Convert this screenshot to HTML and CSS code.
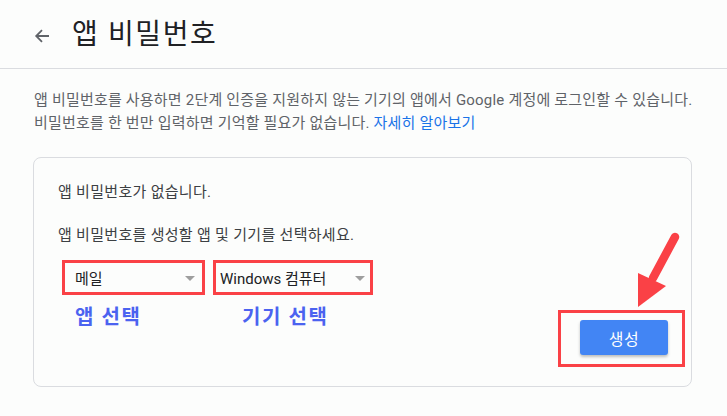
FILE: index.html
```html
<!DOCTYPE html>
<html lang="ko">
<head>
<meta charset="utf-8">
<title>앱 비밀번호</title>
<link rel="stylesheet" href="styles.css">
</head>
<body>
<header class="top">
  <svg class="back" width="16" height="16" viewBox="0 0 16 16" aria-hidden="true">
    <path d="M15 8H2.5M8 2.2L2.2 8L8 13.8" fill="none" stroke="#5f6368" stroke-width="1.8"/>
  </svg>
  <h1 class="title">앱 비밀번호</h1>
</header>
<p class="desc">앱 비밀번호를 사용하면 2단계 인증을 지원하지 않는 기기의 앱에서 Google 계정에 로그인할 수 있습니다.<br>비밀번호를 한 번만 입력하면 기억할 필요가 없습니다. <a class="link" href="#">자세히 알아보기</a></p>
<section class="card">
  <p class="line">앱 비밀번호가 없습니다.</p>
  <p class="line second">앱 비밀번호를 생성할 앱 및 기기를 선택하세요.</p>
  <div class="row">
    <div class="pickers">
      <div class="select s1"><span>메일</span><i class="tri"></i></div>
      <div class="select s2"><span>Windows 컴퓨터</span><i class="tri"></i></div>
      <div class="label l1">앱 선택</div>
      <div class="label l2">기기 선택</div>
    </div>
    <div class="btnbox"><button class="gen">생성</button></div>
  </div>
  <svg class="pointer" width="90" height="90" viewBox="0 0 90 90" aria-hidden="true">
    <path d="M75 13 L53 54" stroke="#fa4146" stroke-width="8.5" stroke-linecap="round" fill="none"/>
    <polygon points="38,49 66,62 38,83" fill="#fa4146"/>
  </svg>
</section>
</body>
</html>
```
FILE: styles.css
```css
html, body {
  margin: 0;
  padding: 0;
  background: #fcfdfc;
}
body {
  font-family: "Roboto", "Noto Sans CJK KR", sans-serif;
  color: #3c4043;
}
.top {
  border-bottom: 1px solid #dadce0;
  display: flex;
  align-items: center;
  padding-left: 34px;
  box-sizing: border-box;
  height: 69px;
  padding-top: 2px;
}
.back {
  display: block;
  margin-top: 2px;
}
.title {
  margin: 0 0 0 22px;
  font-size: 28px;
  font-weight: 400;
  color: #202124;
  line-height: 36px;
  letter-spacing: 1.6px;
}
.desc {
  margin: 20px 0 0 34px;
  font-size: 15px;
  line-height: 23px;
  letter-spacing: 0.2px;
  color: #5f6368;
}
.link {
  color: #1a73e8;
  text-decoration: none;
}
.card {
  position: relative;
  margin: 22px 0 0 33px;
  width: 659px;
  box-sizing: border-box;
  height: 230px;
  border: 1px solid #dadce0;
  border-radius: 8px;
  padding: 24px 6px 0 24px;
}
.line {
  margin: 0;
  font-size: 15px;
  line-height: 20px;
  letter-spacing: 0.3px;
  color: #3c4043;
}
.second {
  margin-top: 23px;
}
.row {
  display: flex;
  justify-content: space-between;
  align-items: flex-start;
  margin-top: 15px;
}
.pickers {
  margin-left: 4px;
  display: grid;
  grid-template-columns: 143px 160px;
  column-gap: 8px;
  row-gap: 10px;
}
.select {
  height: 35px;
  box-sizing: border-box;
  border: 3px solid #fa4146;
  display: flex;
  align-items: center;
  justify-content: space-between;
  font-size: 15px;
  color: #202124;
}
.s1 { padding: 0 7px 0 10px; }
.s2 { padding: 0 5px 0 4px; }
.tri {
  width: 0;
  height: 0;
  border-left: 5.5px solid transparent;
  border-right: 5.5px solid transparent;
  border-top: 5.5px solid #9e9e9e;
  margin-top: 2px;
}
.label {
  font-size: 20px;
  font-weight: 700;
  color: #4b63f0;
  line-height: 24px;
  letter-spacing: 1.6px;
}
.l1 { padding-left: 13px; }
.l2 { padding-left: 29px; }
.btnbox {
  margin-top: 50px;
  width: 127px;
  height: 57px;
  box-sizing: border-box;
  border: 3px solid #fa4146;
  padding: 7px 0 0 19px;
}
.gen {
  width: 88px;
  height: 35px;
  border: none;
  border-radius: 3px;
  background: #4285f4;
  color: #fff;
  font-family: "Roboto", "Noto Sans CJK KR", sans-serif;
  font-size: 16px;
  letter-spacing: 0.5px;
  box-shadow: 0 2px 3px rgba(0,0,0,0.25);
  padding: 0;
}
.pointer {
  position: absolute;
  left: 566px;
  top: 66px;
}
```
